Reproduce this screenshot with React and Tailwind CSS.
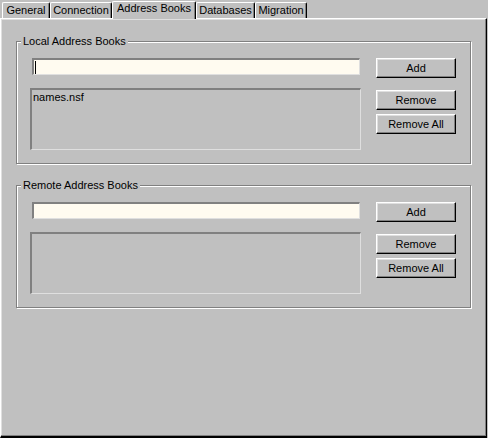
import React from "react";

function Tab({ label, cls, selected }) {
  if (selected) {
    return (
      <div
        className={`relative z-10 -mb-px h-[18px] flex justify-center pt-0 bg-[#c0c0c0] border-l border-t border-white border-r border-r-black rounded-tl-[2px] rounded-tr-[2px] shadow-[inset_-1px_0_0_#808080] ${cls}`}
      >
        <span className="leading-[13px]">{label}</span>
      </div>
    );
  }
  return (
    <div
      className={`h-[16px] flex justify-center pt-0 bg-[#c0c0c0] border-l border-t border-white border-r border-r-black rounded-tl-[2px] rounded-tr-[2px] shadow-[inset_-1px_0_0_#808080] ${cls}`}
    >
      <span className="leading-[13px] mt-[1px]">{label}</span>
    </div>
  );
}

function Button({ label, cls }) {
  return (
    <div
      className={`h-[20px] w-[80px] flex items-center justify-center border border-t-white border-l-white border-r-black border-b-black shadow-[inset_-1px_-1px_0_#808080,inset_1px_1px_0_#dfdfdf] leading-[13px] ${cls}`}
    >
      {label}
    </div>
  );
}

function Group({ title, item, caret, cls }) {
  return (
    <div
      className={`relative w-[455px] h-[123px] border border-[#808080] shadow-[inset_1px_1px_0_#fff,1px_1px_0_#fff] ${cls}`}
    >
      <span className="absolute -top-[7px] left-[4px] px-[2px] bg-[#c0c0c0] leading-[13px]">
        {title}
      </span>
      <div className="flex pt-[16px] pl-[13px] gap-[15px]">
        <div className="flex flex-col w-[331px]">
          <div className="ml-[2px] w-[328px] h-[17px] bg-[#fffbf0] border-t-2 border-l-2 border-[#808080] border-r border-b border-r-[#dfdfdf] border-b-[#dfdfdf] flex items-center">
            {caret && <span className="ml-px w-px h-[13px] bg-black" />}
          </div>
          <div className="mt-[13px] h-[62px] bg-[#c0c0c0] border-t-2 border-l-2 border-[#808080] border-r border-b border-r-[#dfdfdf] border-b-[#dfdfdf] pl-px pt-[1px]">
            {item && <div className="leading-[13px]">{item}</div>}
          </div>
        </div>
        <div className="flex flex-col w-[80px]">
          <Button label="Add" />
          <Button label="Remove" cls="mt-[12px]" />
          <Button label="Remove All" cls="mt-[4px]" />
        </div>
      </div>
    </div>
  );
}

export default function App() {
  return (
    <div className="w-[488px] h-[438px] bg-[#c0c0c0] text-black text-[11px] font-['Liberation_Sans',Arial,sans-serif] flex flex-col overflow-hidden">
      <div className="h-[18px] flex items-end pl-[2px]">
        <Tab label="General" cls="w-[48px]" />
        <Tab label="Connection" cls="w-[62px]" />
        <Tab label="Address Books" cls="w-[84px]" selected />
        <Tab label="Databases" cls="w-[59px]" />
        <Tab label="Migration" cls="w-[52px]" />
      </div>
      <div className="w-[487px] h-[420px] border-l border-t border-white border-r border-r-black border-b-2 border-b-black shadow-[inset_-1px_-1px_0_#808080,inset_1px_1px_0_#dfdfdf] pt-[22px] pl-[15px]">
        <Group title="Local Address Books" item="names.nsf" caret />
        <Group title="Remote Address Books" cls="mt-[21px]" />
      </div>
    </div>
  );
}
